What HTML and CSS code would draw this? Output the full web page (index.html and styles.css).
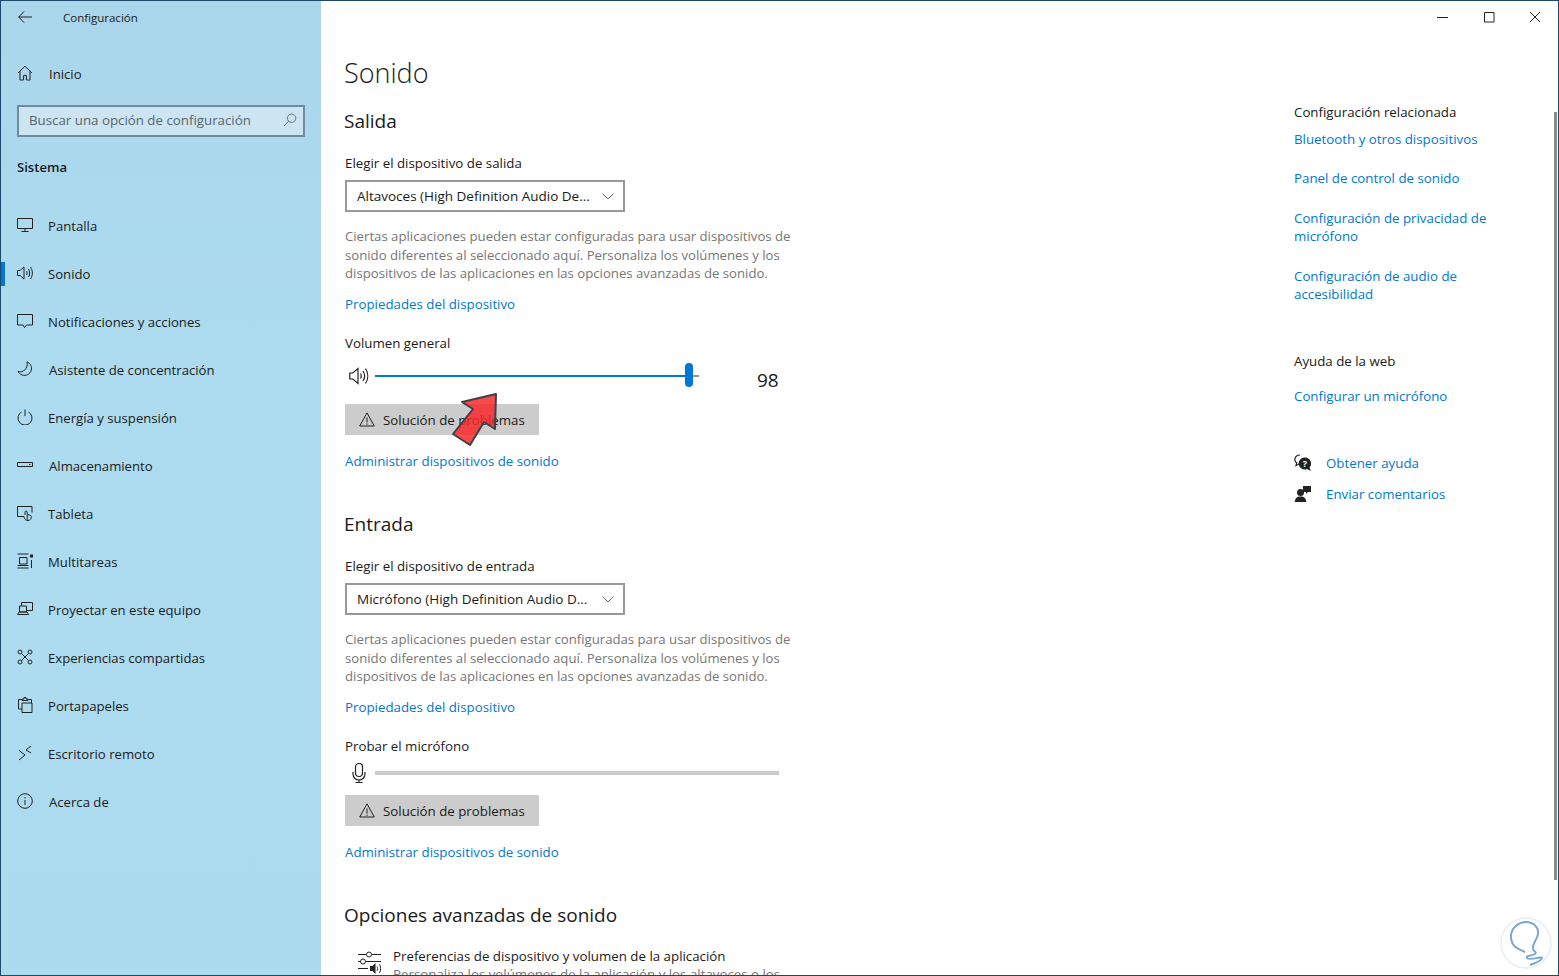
FILE: index.html
```html
<!DOCTYPE html>
<html lang="es">
<head>
<meta charset="utf-8">
<title>Configuración</title>
<link rel="stylesheet" href="styles.css">
</head>
<body>
<div class="window">
  <aside class="sidebar">
    <div class="titlebar">
      <svg class="back" width="14" height="12" viewBox="0 0 14 12"><path d="M6 .5 .7 6 6 11.5M.7 6H14"/></svg>
      <span class="app-name">Configuración</span>
    </div>
    <div class="nav-row home">
      <svg class="ico" viewBox="0 0 16 16"><path d="M1 8 8 1.2 15 8M3 6.2V15h3.6v-4.6h2.8V15H13V6.2"/></svg>
      <span class="n1">Inicio</span>
    </div>
    <div class="search"><span>Buscar una opción de configuración</span>
      <svg width="14" height="14" viewBox="0 0 14 14"><circle cx="8.6" cy="5.2" r="4.2"/><path d="M5.6 8.2 1 13"/></svg>
    </div>
    <div class="group">Sistema</div>
    <nav class="nav">
      <div class="nav-row"><svg class="ico" viewBox="0 0 16 16"><path d="M.5 1.5h15v10H.5zM8 11.5v3M4.5 14.5h7"/></svg><span>Pantalla</span></div>
      <div class="nav-row active"><svg class="ico" viewBox="0 0 16 16"><path d="M.5 5.5h2.5L7 2v12L3 10.500H.5zM9.500 6c.8 1.300.8 2.700 0 4M11.500 4c1.600 2.500 1.600 5.500 0 8M13.500 2c2.500 3.700 2.500 8.300 0 12"/></svg><span>Sonido</span></div>
      <div class="nav-row"><svg class="ico" viewBox="0 0 16 16"><path d="M.5 1.500h15v10.500H9.500L7.500 14.500 6 12H.5z"/></svg><span>Notificaciones y acciones</span></div>
      <div class="nav-row"><svg class="ico" viewBox="0 0 16 16"><path d="M10 .8c3.500 1.700 5.200 5 4.200 8.500-1.200 4-5.400 6-9 4.700C3.300 13.300 1.800 12 1 10.400c4.800 2 10.500-3 9-9.600z"/></svg><span class="n1">Asistente de concentración</span></div>
      <div class="nav-row"><svg class="ico" viewBox="0 0 16 16"><path d="M4.500 3A7 7 0 1 0 11.500 3M8 .5V7"/></svg><span>Energía y suspensión</span></div>
      <div class="nav-row"><svg class="ico" viewBox="0 0 16 16"><path d="M.5 5.500h15v4H.5zM12 7.500h1.500"/></svg><span class="n1">Almacenamiento</span></div>
      <div class="nav-row"><svg class="ico" viewBox="0 0 16 16"><path d="M7 11.500H.5v-10h14.500v6M8 10V7.200a1 1 0 0 1 2.200 0v2.300l3 .8c1 .3 1.300 1 1.200 2-.3 2-1.700 3.200-3.400 3.200-2 0-3-1-3.500-2.200L6.500 11M10.200 10v5"/></svg><span>Tableta</span></div>
      <div class="nav-row"><svg class="ico" viewBox="0 0 16 16"><path d="M.5 1h11M.5 15h11M2.500 4.500h7.500v6.500H2.500zM.5 12.500h11M14.500 7v8"/><path class="solid" d="M13 1.500h3v3h-3z"/></svg><span>Multitareas</span></div>
      <div class="nav-row"><svg class="ico" viewBox="0 0 16 16"><path d="M4.500 5V1.500h11v8h-5.500M2.500 5h7v6h-7zM.5 13.500h11l-1.500-2.500H2z"/></svg><span>Proyectar en este equipo</span></div>
      <div class="nav-row"><svg class="ico" viewBox="0 0 16 16"><circle cx="3" cy="3" r="2"/><circle cx="13" cy="3" r="2"/><circle cx="3" cy="13" r="2"/><circle cx="13" cy="13" r="2"/><path d="M4.500 4.500l7 7M11.500 4.500l-7 7"/></svg><span>Experiencias compartidas</span></div>
      <div class="nav-row"><svg class="ico" viewBox="0 0 16 16"><path d="M5 2.500H1.500V12H5M11 2.500h3.500V6M5 6h10v9.500H5zM5 3.500V2h2V.5h2V2h2v1.500z"/></svg><span>Portapapeles</span></div>
      <div class="nav-row"><svg class="ico" viewBox="0 0 16 16"><path d="M2 5.500 8 10 2 15M14 1 9 5l5 3"/></svg><span>Escritorio remoto</span></div>
      <div class="nav-row"><svg class="ico" viewBox="0 0 16 16"><circle cx="8" cy="8" r="7.300"/><path d="M8 7v5M8 4v1.500"/></svg><span class="n1">Acerca de</span></div>
    </nav>
  </aside>

  <main class="main">
    <div class="captions">
      <svg width="12" height="12" viewBox="0 0 12 12"><path d="M0 6.500h11"/></svg>
      <svg width="12" height="12" viewBox="0 0 12 12"><path d="M1.500 1.500h9.500v9.500H1.500z"/></svg>
      <svg width="12" height="12" viewBox="0 0 12 12"><path d="M1 1l10 10M11 1 1 11"/></svg>
    </div>
    <div class="pane">
      <section class="content">
        <h1>Sonido</h1>
        <h2 class="h-first">Salida</h2>
        <div class="label">Elegir el dispositivo de salida</div>
        <div class="select"><span>Altavoces (High Definition Audio De...</span><svg width="12" height="7" viewBox="0 0 12 7"><path d="M.5.500 6 6 11.500.5"/></svg></div>
        <p class="desc">Ciertas aplicaciones pueden estar configuradas para usar dispositivos de<br>sonido diferentes al seleccionado aquí. Personaliza los volúmenes y los<br>dispositivos de las aplicaciones en las opciones avanzadas de sonido.</p>
        <a class="link block-link">Propiedades del dispositivo</a>
        <div class="label label-gap">Volumen general</div>
        <div class="slider-row">
          <svg class="ico big" viewBox="0 0 20 20"><path d="M.8 7h3L9 2.500v15L3.800 13h-3zM11.500 7.500c1 1.600 1 3.400 0 5M14 5c2 3 2 7 0 10M16.500 2.500c3 4.500 3 10.500 0 15"/></svg>
          <div class="track"><div class="thumb"></div></div>
          <div class="value">98</div>
        </div>
        <button class="btn"><svg width="16" height="15" viewBox="0 0 16 15"><path d="M8 .9 15.300 14H.7zM8 5.500v5M8 11.500v1.300"/></svg><span>Solución de problemas</span></button>
        <a class="link block-link after-btn">Administrar dispositivos de sonido</a>

        <h2 class="h-next">Entrada</h2>
        <div class="label">Elegir el dispositivo de entrada</div>
        <div class="select"><span>Micrófono (High Definition Audio D...</span><svg width="12" height="7" viewBox="0 0 12 7"><path d="M.5.500 6 6 11.500.5"/></svg></div>
        <p class="desc">Ciertas aplicaciones pueden estar configuradas para usar dispositivos de<br>sonido diferentes al seleccionado aquí. Personaliza los volúmenes y los<br>dispositivos de las aplicaciones en las opciones avanzadas de sonido.</p>
        <a class="link block-link">Propiedades del dispositivo</a>
        <div class="label label-gap">Probar el micrófono</div>
        <div class="meter-row">
          <svg class="ico big" viewBox="0 0 20 20"><rect x="6.500" y=".5" width="7" height="13" rx="3.500"/><path d="M4 9v2a6 6 0 0 0 12 0V9M10 17v2.500M6.500 19.500h7"/></svg>
          <div class="meter"></div>
        </div>
        <button class="btn"><svg width="16" height="15" viewBox="0 0 16 15"><path d="M8 .9 15.300 14H.7zM8 5.500v5M8 11.500v1.300"/></svg><span>Solución de problemas</span></button>
        <a class="link block-link after-btn">Administrar dispositivos de sonido</a>

        <h2 class="h-next">Opciones avanzadas de sonido</h2>
        <div class="pref">
          <svg width="26" height="24" viewBox="0 0 26 24"><path d="M1 3.500h8.500M14.500 3.500H24M1 10.500h2.500M8.500 10.500H24M1 17.500h10"/><circle cx="12" cy="3.500" r="2.500"/><circle cx="6" cy="10.500" r="2.500"/><path class="solid" d="M13 15h2.500l3-3v11l-3-3H13z"/><path d="M20 15.500c.8 1.300.8 3 0 4.300M22.500 13.500c1.500 2.600 1.500 5.700 0 8.300"/></svg>
          <div>
            <div class="pref-title">Preferencias de dispositivo y volumen de la aplicación</div>
            <div class="pref-desc">Personaliza los volúmenes de la aplicación y los altavoces o los</div>
          </div>
        </div>
      </section>

      <aside class="related">
        <div class="label">Configuración relacionada</div>
        <a class="link r1">Bluetooth y otros dispositivos</a>
        <a class="link r2">Panel de control de sonido</a>
        <a class="link r3">Configuración de privacidad de<br>micrófono</a>
        <a class="link r4">Configuración de audio de<br>accesibilidad</a>
        <div class="label r5">Ayuda de la web</div>
        <a class="link r6">Configurar un micrófono</a>
        <div class="help r7">
          <svg width="18" height="18" viewBox="0 0 18 18"><path class="thin" d="M6 1C3 1 .8 3 .8 5.500c0 1.500.8 2.800 2 3.500L2 11.500l3-1.500"/><path class="solid" d="M11 3.500a6 6 0 0 1 4.500 10l1.500 3.500-4-2a6 6 0 1 1-2-11.500z"/><text x="11" y="13" class="q">?</text></svg>
          <a class="link">Obtener ayuda</a>
        </div>
        <div class="help r8">
          <svg width="18" height="18" viewBox="0 0 18 18"><path class="solid" d="M9 1h8v6h-3l-2 2V7H9z"/><circle class="solid" cx="6.500" cy="7.500" r="3.500"/><path class="solid" d="M.8 17c0-3.500 2-5.500 5.700-5.500s5.700 2 5.700 5.500z"/></svg>
          <a class="link">Enviar comentarios</a>
        </div>
      </aside>
      <div class="scrollbar"></div>
    </div>
  </main>

  <svg class="arrow" width="60" height="60" viewBox="0 0 60 60"><path d="M47 5 13 13 24 20 4 45 21 56 35 33 46 40z"/></svg>

  <svg class="stamp" width="54" height="54" viewBox="0 0 54 54"><circle class="disc" cx="27" cy="27" r="25"/><path class="logo" d="M26 36C20 33 13 32 12 22 11 12 20 6 27 6 34 6 40 11 39 18 38 24 33 28 34 33 35 36 38 36 36 38 33 40 27 39 28 42 30 45 43 40 43 42 43 45 36 47 31 49"/></svg>
</div>
</body>
</html>
```
FILE: styles.css
```css
* { box-sizing: border-box; }
html, body { margin: 0; padding: 0; }
body {
  width: 1559px;
  height: 976px;
  overflow: hidden;
  font-family: "Open Sans", "Noto Sans", sans-serif;
  font-size: 13.3px;
  color: #1a1a1a;
  background: #fff;
}
svg { fill: none; stroke: #222; stroke-width: 1; flex: none; display: block; }
.window {
  position: relative;
  width: 1559px;
  height: 976px;
  display: flex;
  overflow: hidden;
  border: 1px solid #1b4a68;
}
.sidebar {
  width: 320px;
  flex: none;
  background: linear-gradient(to bottom, #aad6ec, #addcf0 45%, #acdbef);
  display: flex;
  flex-direction: column;
}
.titlebar {
  height: 34px;
  display: flex;
  align-items: center;
  padding: 0 0 2px 17px;
}
.app-name { font-size: 11.5px; margin-left: 31px; }
.nav-row {
  height: 48px;
  display: flex;
  align-items: center;
  padding-left: 16px;
  gap: 15px;
  position: relative;
  font-size: 13.15px;
}
.home { height: 30px; margin-top: 24px; }
.n1 { margin-left: 1px; }
.ico { width: 16px; height: 16px; margin-top: -2px; }
.active::before {
  content: "";
  position: absolute;
  left: 0;
  top: 12px;
  width: 4px;
  height: 24px;
  background: #0078d4;
}
.search {
  margin: 16px 0 0 16px;
  width: 288px;
  height: 32px;
  border: 2px solid #6f8c9f;
  background: #cde5f2;
  color: #56666f;
  display: flex;
  align-items: center;
  justify-content: space-between;
  padding: 0 6px 2px 10px;
}
.search svg { stroke: #66757e; }
.group { margin: 20px 0 0 16px; font-weight: 600; line-height: 20px; font-size: 13.1px; }
.nav { margin-top: 25px; }

.main { flex: 1; display: flex; flex-direction: column; min-width: 0; position: relative; }
.captions {
  height: 34px;
  flex: none;
  display: flex;
  justify-content: flex-end;
  gap: 34px;
  padding: 10px 17px 0 0;
}
.pane { flex: 1; display: flex; position: relative; overflow: hidden; min-height: 0; }
.content { width: 973px; flex: none; padding: 18px 0 0 24px; }
h1 {
  margin: 0 0 0 -1px;
  font-weight: 300;
  font-size: 27px;
  line-height: 40px;
  color: #1a1a1a;
}
h2 {
  margin: 0 0 0 -1px;
  font-weight: 400;
  font-size: 19px;
  line-height: 28px;
}
.h-first { margin-top: 14px; }
.h-next { margin-top: 39px; }
.label { line-height: 20px; }
.content > .label { margin-top: 18px; }
.content > .label-gap { margin-top: 19px; }
.select {
  margin-top: 7px;
  width: 280px;
  height: 32px;
  border: 2px solid #999;
  display: flex;
  align-items: center;
  justify-content: space-between;
  padding: 0 9px 0 10px;
  font-size: 13.5px;
}
.select svg { stroke: #666; }
.desc {
  margin: 15px 0 0;
  line-height: 18.5px;
  color: #767676;
  font-size: 13.18px;
}
.link { color: #0078d4; line-height: 20px; display: block; }
.block-link { margin-top: 11.5px; }
.after-btn { margin-top: 16px; }
.slider-row {
  margin-top: 11px;
  height: 30px;
  display: flex;
  align-items: flex-start;
  padding-left: 4px;
}
.big { width: 20px; height: 20px; margin-top: 2px; stroke-width: 1.2; }
.track {
  position: relative;
  margin: 11px 0 0 6px;
  width: 324px;
  height: 2px;
  background: linear-gradient(to right, #0078d4 314px, #999 314px);
}
.thumb {
  position: absolute;
  left: 310px;
  top: -12px;
  width: 8px;
  height: 24px;
  border-radius: 4px;
  background: #0078d4;
}
.value { margin: 4px 0 0 58px; font-size: 19px; line-height: 24px; }
.btn {
  display: flex;
  align-items: center;
  gap: 8px;
  margin: 10px 0 0;
  padding: 0 14px;
  width: 194px;
  height: 31px;
  border: 0;
  background: #ccc;
  color: #1a1a1a;
  font: inherit;
  white-space: nowrap;
}
.meter-row { margin-top: 6px; height: 23px; display: flex; padding-left: 4px; }
.meter { margin: 9px 0 0 6px; width: 404px; height: 4px; background: #ccc; }
.meter-row .big { margin-top: 1px; }
.pref { margin: 17px 0 0 12px; display: flex; gap: 10px; }
.pref svg { margin-top: 5px; }
.pref-title { line-height: 20px; }
.pref-desc { line-height: 16px; color: #767676; white-space: nowrap; }
.solid { fill: #222; stroke: none; }

.related { padding: 67px 0 0 0; width: 240px; flex: none; }
.related .link { line-height: 18px; }
.related .r1 { margin-top: 7px; line-height: 20px; }
.related .r2 { margin-top: 19px; line-height: 20px; }
.related .r3 { margin-top: 21px; }
.related .r4 { margin-top: 22px; }
.r5 { margin-top: 48px; }
.related .r6 { margin-top: 15px; line-height: 20px; }
.help { display: flex; align-items: center; gap: 14px; height: 20px; }
.r7 { margin-top: 47px; }
.r8 { margin-top: 11px; }
.help svg { stroke-width: 1.2; }
.q { fill: #fff; stroke: none; font-size: 9px; font-weight: 700; text-anchor: middle; }
.scrollbar {
  position: absolute;
  right: 1px;
  top: 77px;
  width: 3px;
  height: 768px;
  background: #8a8a8a;
}
.arrow { position: absolute; left: 448px; top: 388px; overflow: visible; }
.arrow path { fill: rgba(248, 38, 42, .84); stroke: #3e4145; stroke-width: 2; stroke-linejoin: round; }
.stamp { position: absolute; left: 1498px; top: 915px; }
.disc { fill: #fff; stroke: #e6eef6; stroke-width: 1.5; }
.logo { stroke: #7ea6d2; stroke-width: 2; }
```
